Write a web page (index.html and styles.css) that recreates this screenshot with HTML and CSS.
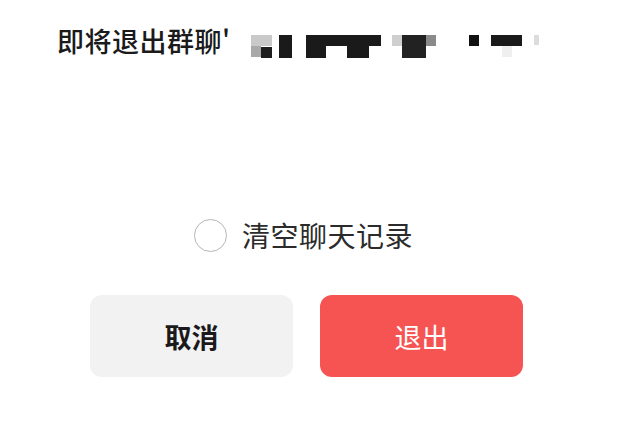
FILE: index.html
```html
<!DOCTYPE html>
<html lang="zh-CN">
<head>
    <meta charset="UTF-8">
    <meta name="viewport" content="width=device-width, initial-scale=1.0">
    <title>退出群聊</title>
    <link rel="stylesheet" href="styles.css">
</head>
<body>
    <div class="dialog">
        <div class="title">
            <span class="title-text">即将退出群聊'</span>
            <span class="mosaic" aria-hidden="true">
                <i class="px" style="left:0;top:0;width:21px;height:11px;background:#c9c9c9"></i>
                <i class="px" style="left:0;top:11px;width:10px;height:11px;background:#a9a9a9"></i>
                <i class="px" style="left:10px;top:12px;width:11px;height:11px;background:#1e1e1e"></i>
                <i class="px" style="left:28px;top:0;width:13px;height:23px;background:#1a1a1a"></i>
                <i class="px" style="left:55px;top:0;width:20px;height:23px;background:#1a1a1a"></i>
                <i class="px" style="left:75px;top:0;width:55px;height:11px;background:#1a1a1a"></i>
                <i class="px" style="left:96px;top:11px;width:22px;height:12px;background:#1a1a1a"></i>
                <i class="px" style="left:141px;top:0;width:10px;height:11px;background:#cfcfcf"></i>
                <i class="px" style="left:151px;top:0;width:24px;height:23px;background:#222"></i>
                <i class="px" style="left:175px;top:0;width:10px;height:11px;background:#8a8a8a"></i>
                <i class="px" style="left:218px;top:0;width:10px;height:11px;background:#111"></i>
                <i class="px" style="left:240px;top:0;width:31px;height:11px;background:#1a1a1a"></i>
                <i class="px" style="left:251px;top:11px;width:10px;height:11px;background:#efefef"></i>
                <i class="px" style="left:283px;top:0;width:5px;height:10px;background:#dcdcdc"></i>
            </span>
        </div>

        <label class="clear-option">
            <span class="radio"></span>
            <span class="clear-text">清空聊天记录</span>
        </label>

        <div class="actions">
            <button class="btn btn-cancel">取消</button>
            <button class="btn btn-exit">退出</button>
        </div>
    </div>
</body>
</html>
```

FILE: styles.css
```css
body {
    margin: 0;
    padding: 0;
    background-color: #fff;
    font-family: "Noto Sans CJK SC", "Noto Sans", sans-serif;
    color: #1a1a1a;
}
.dialog {
    width: 619px;
    height: 423px;
    display: flex;
    flex-direction: column;
}
.title {
    display: flex;
    align-items: center;
    padding: 18px 0 0 57px;
    height: 44px;
}
.title-text {
    font-size: 27px;
    font-weight: 500;
    letter-spacing: 0.5px;
}
.mosaic {
    position: relative;
    display: inline-block;
    width: 290px;
    height: 23px;
    margin-left: 20px;
    margin-top: 13px;
}
.mosaic .px {
    position: absolute;
    display: block;
}
.clear-option {
    display: flex;
    align-items: center;
    gap: 15px;
    margin-top: 153px;
    padding-left: 194px;
}
.radio {
    width: 31px;
    height: 31px;
    border: 1.5px solid #b5b5b5;
    border-radius: 50%;
}
.clear-text {
    font-size: 28px;
    color: #2b2b2b;
    letter-spacing: 0.5px;
}
.actions {
    display: flex;
    gap: 27px;
    padding-left: 90px;
    margin-top: 40px;
}
.btn {
    width: 203px;
    height: 82px;
    border: none;
    border-radius: 12px;
    font-family: inherit;
    font-size: 27px;
    cursor: pointer;
}
.btn-cancel {
    background-color: #f2f2f2;
    color: #1a1a1a;
    font-weight: 700;
}
.btn-exit {
    background-color: #f65353;
    color: #fff;
    font-weight: 400;
}
```
